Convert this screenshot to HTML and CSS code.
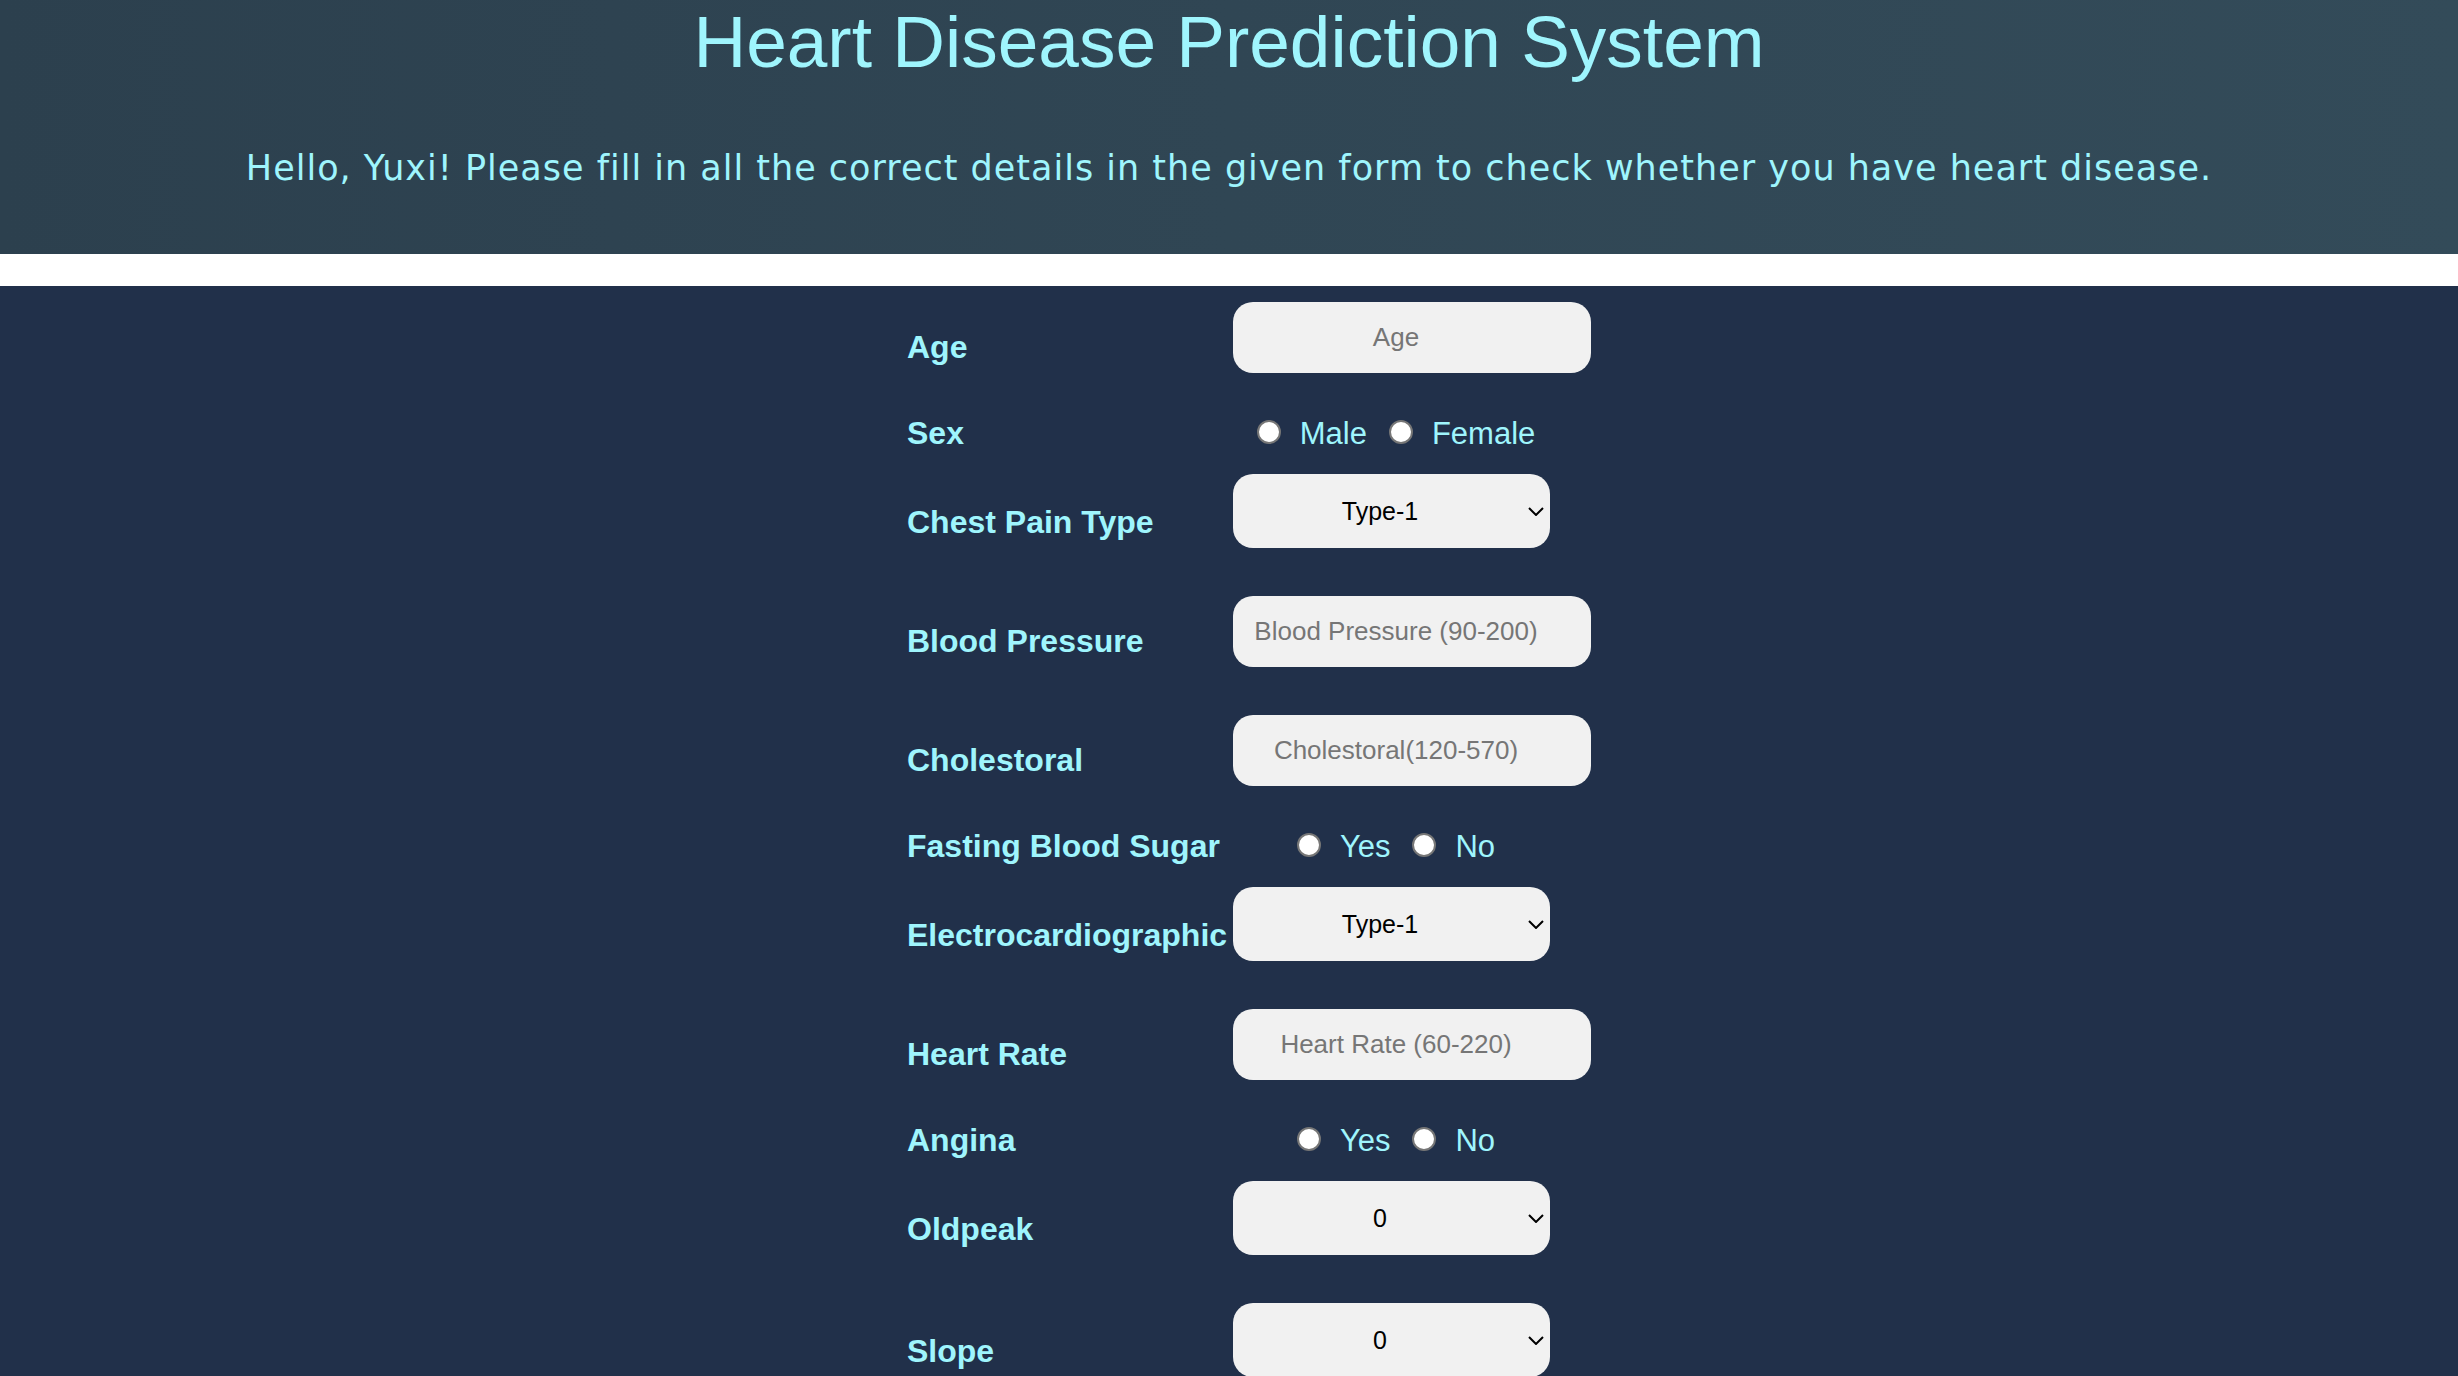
FILE: index.html
```html
<!DOCTYPE html>
<html lang="en">
<head>
<meta charset="utf-8">
<title>Heart Disease Prediction System</title>
<link rel="stylesheet" href="styles.css">
</head>
<body>
<header class="hero">
  <h1 class="title">Heart Disease Prediction System</h1>
  <p class="lead">Hello, Yuxi! Please fill in all the correct details in the given form to check whether you have heart disease.</p>
</header>
<main class="panel">
  <form class="form">
    <div class="row ctl">
      <label class="lbl" for="age">Age</label>
      <input class="field" id="age" type="text" placeholder="Age">
    </div>
    <div class="row rad">
      <span class="lbl">Sex</span>
      <div class="choices"><label class="opt"><input class="radio" type="radio" name="sex">Male</label><label class="opt"><input class="radio" type="radio" name="sex">Female</label></div>
    </div>
    <div class="row ctl">
      <label class="lbl" for="cp">Chest Pain Type</label>
      <div class="pick">
        <select class="select" id="cp"><option>Type-1</option><option>Type-2</option><option>Type-3</option><option>Type-4</option></select>
        <svg class="chev" viewBox="0 0 16 9" width="16" height="9"><path d="M1 1 L8 8 L15 1" fill="none" stroke="#000" stroke-width="2"/></svg>
      </div>
    </div>
    <div class="row ctl">
      <label class="lbl" for="bp">Blood Pressure</label>
      <input class="field" id="bp" type="text" placeholder="Blood Pressure (90-200)">
    </div>
    <div class="row ctl">
      <label class="lbl" for="chol">Cholestoral</label>
      <input class="field" id="chol" type="text" placeholder="Cholestoral(120-570)">
    </div>
    <div class="row rad">
      <span class="lbl">Fasting Blood Sugar</span>
      <div class="choices"><label class="opt"><input class="radio" type="radio" name="fbs">Yes</label><label class="opt"><input class="radio" type="radio" name="fbs">No</label></div>
    </div>
    <div class="row ctl">
      <label class="lbl" for="ecg">Electrocardiographic</label>
      <div class="pick">
        <select class="select" id="ecg"><option>Type-1</option><option>Type-2</option><option>Type-3</option></select>
        <svg class="chev" viewBox="0 0 16 9" width="16" height="9"><path d="M1 1 L8 8 L15 1" fill="none" stroke="#000" stroke-width="2"/></svg>
      </div>
    </div>
    <div class="row ctl">
      <label class="lbl" for="hr">Heart Rate</label>
      <input class="field" id="hr" type="text" placeholder="Heart Rate (60-220)">
    </div>
    <div class="row rad">
      <span class="lbl">Angina</span>
      <div class="choices"><label class="opt"><input class="radio" type="radio" name="ang">Yes</label><label class="opt"><input class="radio" type="radio" name="ang">No</label></div>
    </div>
    <div class="row ctl">
      <label class="lbl" for="op">Oldpeak</label>
      <div class="pick">
        <select class="select" id="op"><option>0</option><option>1</option><option>2</option><option>3</option><option>4</option><option>5</option><option>6</option></select>
        <svg class="chev" viewBox="0 0 16 9" width="16" height="9"><path d="M1 1 L8 8 L15 1" fill="none" stroke="#000" stroke-width="2"/></svg>
      </div>
    </div>
    <div class="row ctl">
      <label class="lbl" for="sl">Slope</label>
      <div class="pick">
        <select class="select" id="sl"><option>0</option><option>1</option><option>2</option></select>
        <svg class="chev" viewBox="0 0 16 9" width="16" height="9"><path d="M1 1 L8 8 L15 1" fill="none" stroke="#000" stroke-width="2"/></svg>
      </div>
    </div>
  </form>
</main>
</body>
</html>
```
FILE: styles.css
```css
* {
  box-sizing: border-box;
}

body {
  margin: 0;
  background: #ffffff;
  font-family: "Liberation Sans", Arial, sans-serif;
}

.hero {
  height: 254px;
  padding-top: 0;
  background: linear-gradient(90deg, #2c404e 0%, #304654 50%, #334b59 100%);
  color: #9ff5fd;
  text-align: center;
  overflow: hidden;
}

.title {
  margin: 0;
  font-size: 73px;
  font-weight: 400;
  line-height: 84px;
}

.lead {
  margin: 64px 0 0;
  font-family: "DejaVu Sans", "Liberation Sans", sans-serif;
  font-size: 35px;
  line-height: 41px;
  letter-spacing: 1px;
  white-space: nowrap;
}

.panel {
  margin-top: 32px;
  min-height: 1090px;
  padding-top: 16px;
  background: #21304a;
}

.form {
  width: 644px;
  margin: 0 auto;
}

.row {
  display: flex;
  align-items: flex-end;
}

.ctl + .ctl {
  margin-top: 48px;
}

.rad {
  margin-top: 35px;
}

.rad + .ctl {
  margin-top: 15px;
}

.lbl {
  flex: none;
  width: 326px;
  font-size: 32px;
  font-weight: 700;
  line-height: 51px;
  color: #9ff5fd;
  white-space: nowrap;
}

.field {
  flex: none;
  width: 358px;
  height: 71px;
  padding: 0 48px 0 16px;
  border: 0;
  border-radius: 20px;
  background: #f1f1f1;
  font-family: "Liberation Sans", Arial, sans-serif;
  font-size: 26px;
  color: #000;
  text-align: center;
  outline: none;
}

.field::placeholder {
  color: #767676;
}

.pick {
  position: relative;
  flex: none;
  width: 317px;
  height: 74px;
}

.select {
  -webkit-appearance: none;
  appearance: none;
  width: 317px;
  height: 74px;
  padding: 0 30px 0 7px;
  border: 0;
  border-radius: 20px;
  background: #f1f1f1;
  font-family: "Liberation Sans", Arial, sans-serif;
  font-size: 25px;
  color: #000;
  text-align: center;
  text-align-last: center;
  outline: none;
}

.chev {
  position: absolute;
  right: 6px;
  top: 33px;
  pointer-events: none;
}

.choices {
  flex: none;
  width: 326px;
  font-size: 31px;
  line-height: 51px;
  color: #9ff5fd;
  text-align: center;
  white-space: nowrap;
}

.opt + .opt {
  margin-left: 22px;
}

.radio {
  -webkit-appearance: none;
  appearance: none;
  display: inline-block;
  width: 24px;
  height: 24px;
  margin: 0 19px 0 0;
  vertical-align: baseline;
  border: 2px solid #767676;
  border-radius: 50%;
  background: #ffffff;
}
```
